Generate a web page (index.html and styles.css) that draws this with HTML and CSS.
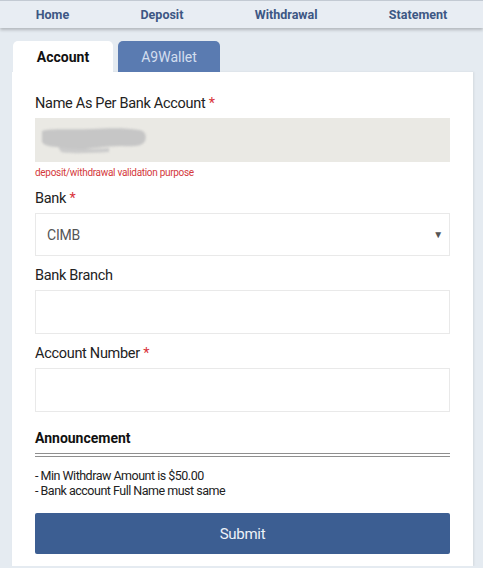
FILE: index.html
```html
<!DOCTYPE html>
<html>
<head>
<meta charset="utf-8">
<link rel="stylesheet" href="styles.css">
</head>
<body>
<nav class="topnav">
  <a class="nav-item">Home</a>
  <a class="nav-item">Deposit</a>
  <a class="nav-item">Withdrawal</a>
  <a class="nav-item">Statement</a>
</nav>
<main class="wrap">
  <div class="tabs">
    <div class="tab tab-active">Account</div>
    <div class="tab tab-other">A9Wallet</div>
  </div>
  <section class="card">
    <div class="field">
      <div class="label">Name As Per Bank Account <span class="req">*</span></div>
      <div class="input input-disabled">
        <svg class="blur" width="112" height="34" viewBox="0 0 112 34">
          <path d="M3 8 C 12 5, 32 7, 52 6 C 72 5, 88 5, 100 7 C 106 8, 108 12, 106 18 C 104 23, 94 24, 82 23 C 66 23, 52 26, 34 27 C 24 28, 18 27, 20 24 C 13 24, 5 23, 3 19 Z" fill="#c6c6c6"/>
          <path d="M20 24 C 30 26, 50 27, 70 25 L 70 29 C 50 30, 30 31, 22 29 Z" fill="#cbcbcb"/>
        </svg>
      </div>
      <div class="help">deposit/withdrawal validation purpose</div>
    </div>
    <div class="field">
      <div class="label">Bank <span class="req">*</span></div>
      <div class="input select"><span>CIMB</span><span class="arrow">&#9660;</span></div>
    </div>
    <div class="field">
      <div class="label">Bank Branch</div>
      <div class="input"></div>
    </div>
    <div class="field">
      <div class="label">Account Number <span class="req">*</span></div>
      <div class="input"></div>
    </div>
    <div class="announce">Announcement</div>
    <div class="notes">
      <div>- Min Withdraw Amount is $50.00</div>
      <div>- Bank account Full Name must same</div>
    </div>
    <button class="submit">Submit</button>
  </section>
</main>
</body>
</html>
```

FILE: styles.css
```css
html, body {
  margin: 0;
  padding: 0;
  background: #e5ebf1;
  font-family: Roboto, "Liberation Sans", Arial, sans-serif;
  color: #222;
}
.topnav {
  height: 28px;
  border-top: 1px solid #c3cad3;
  background: #e8edf3;
  box-shadow: 0 2px 3px rgba(0, 0, 0, 0.22);
  display: flex;
  justify-content: space-around;
  align-items: center;
  box-sizing: border-box;
}
.nav-item {
  font-size: 12.5px;
  font-weight: bold;
  color: #3d5784;
}
.wrap {
  padding: 13px 10px 0 12px;
}
.tabs {
  display: flex;
  gap: 5px;
  padding-left: 1px;
}
.tab {
  width: 100px;
  height: 31px;
  box-sizing: border-box;
  display: flex;
  align-items: center;
  justify-content: center;
  font-size: 14px;
  border-radius: 5px 5px 0 0;
}
.tab-active {
  background: #fff;
  font-weight: bold;
  color: #111;
}
.tab-other {
  width: 102px;
  background: #5a7bb1;
  color: #d3deef;
}
.card {
  background: #fff;
  padding: 22px 23px 12px 23px;
  box-shadow: 1px 0 2px rgba(0, 0, 0, 0.08);
}
.field {
  margin-bottom: 10px;
}
.label {
  font-size: 14.5px;
  letter-spacing: -0.3px;
  line-height: 20px;
  margin-bottom: 4px;
  color: #222;
}
.req {
  color: #d9333a;
}
.input {
  height: 44px;
  box-sizing: border-box;
  border: 1px solid #e9e9e9;
  background: #fff;
}
.input-disabled {
  background: #eae9e4;
  border-color: #eae9e4;
  display: flex;
  align-items: center;
  padding-left: 3px;
}
.blur {
  filter: blur(1.2px);
  display: block;
}
.help {
  font-size: 10px;
  letter-spacing: -0.3px;
  line-height: 14px;
  margin-top: 4px;
  margin-bottom: -1px;
  color: #d4393c;
}
.select {
  height: 43px;
  display: flex;
  justify-content: space-between;
  align-items: center;
  padding: 0 6px 0 11px;
  font-size: 14px;
  letter-spacing: -0.2px;
  color: #555;
}
.arrow {
  font-size: 10px;
  color: #555;
}
.announce {
  margin-top: 16px;
  font-size: 14px;
  font-weight: bold;
  line-height: 20px;
  padding-bottom: 5px;
  border-bottom: 4px double #8f8f8f;
  color: #111;
}
.notes {
  margin-top: 11px;
  font-size: 12.5px;
  letter-spacing: -0.5px;
  line-height: 15px;
  color: #222;
}
.submit {
  display: block;
  width: 100%;
  margin-top: 15px;
  height: 41px;
  border: none;
  border-radius: 2px;
  background: #3c5e92;
  color: #eef2f8;
  font-family: inherit;
  font-size: 15px;
  letter-spacing: -0.3px;
}
```
